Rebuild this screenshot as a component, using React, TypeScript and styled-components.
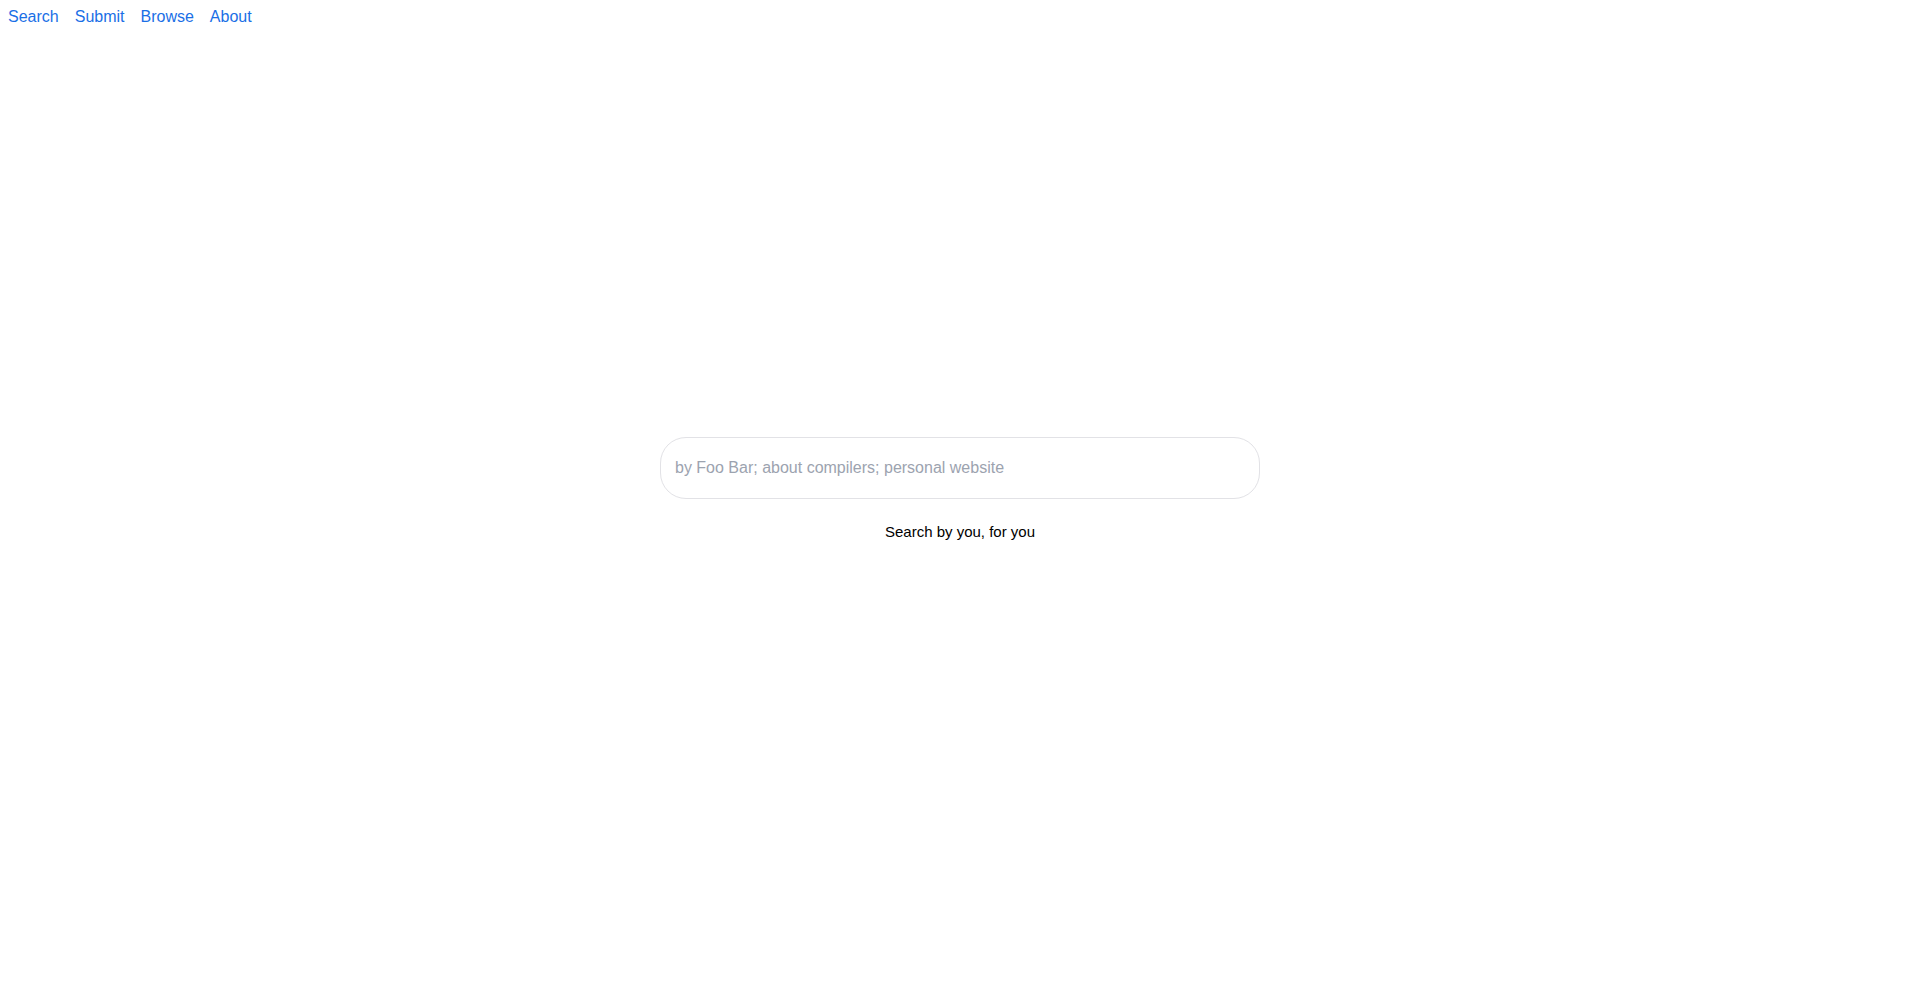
import React from "react";
import styled, { createGlobalStyle } from "styled-components";

const GlobalStyle = createGlobalStyle`
  html, body {
    margin: 0;
    padding: 0;
    background: #ffffff;
    font-family: "Liberation Sans", Arial, sans-serif;
  }

  *, *::before, *::after {
    box-sizing: border-box;
  }
`;

const Page = styled.div`
  display: flex;
  flex-direction: column;
  min-height: 100vh;
`;

const Nav = styled.nav`
  display: flex;
  gap: 16px;
  padding: 8px 8px 0;
  font-size: 16px;
  line-height: 18px;
`;

const NavLink = styled.a`
  color: #1a6fe6;
  text-decoration: none;
  cursor: pointer;
`;

const Main = styled.main`
  flex: 1;
  display: flex;
  flex-direction: column;
  align-items: center;
  justify-content: center;
  padding-bottom: 43px;
`;

const SearchInput = styled.input`
  width: 600px;
  height: 62px;
  padding: 0 14px;
  border: 1px solid #e2e2e6;
  border-radius: 26px;
  font-family: "Liberation Sans", Arial, sans-serif;
  font-size: 16px;
  color: #111;
  outline: none;

  &::placeholder {
    color: #9ca3af;
  }
`;

const Tagline = styled.p`
  margin: 24px 0 0;
  font-size: 15px;
  line-height: 17px;
  color: #000;
`;

const links = ["Search", "Submit", "Browse", "About"];

export default function App() {
  return (
    <>
      <GlobalStyle />
      <Page>
        <Nav>
          {links.map((l) => (
            <NavLink key={l} href="#">
              {l}
            </NavLink>
          ))}
        </Nav>

        <Main>
          <SearchInput
            type="text"
            placeholder="by Foo Bar; about compilers; personal website"
          />
          <Tagline>Search by you, for you</Tagline>
        </Main>
      </Page>
    </>
  );
}
